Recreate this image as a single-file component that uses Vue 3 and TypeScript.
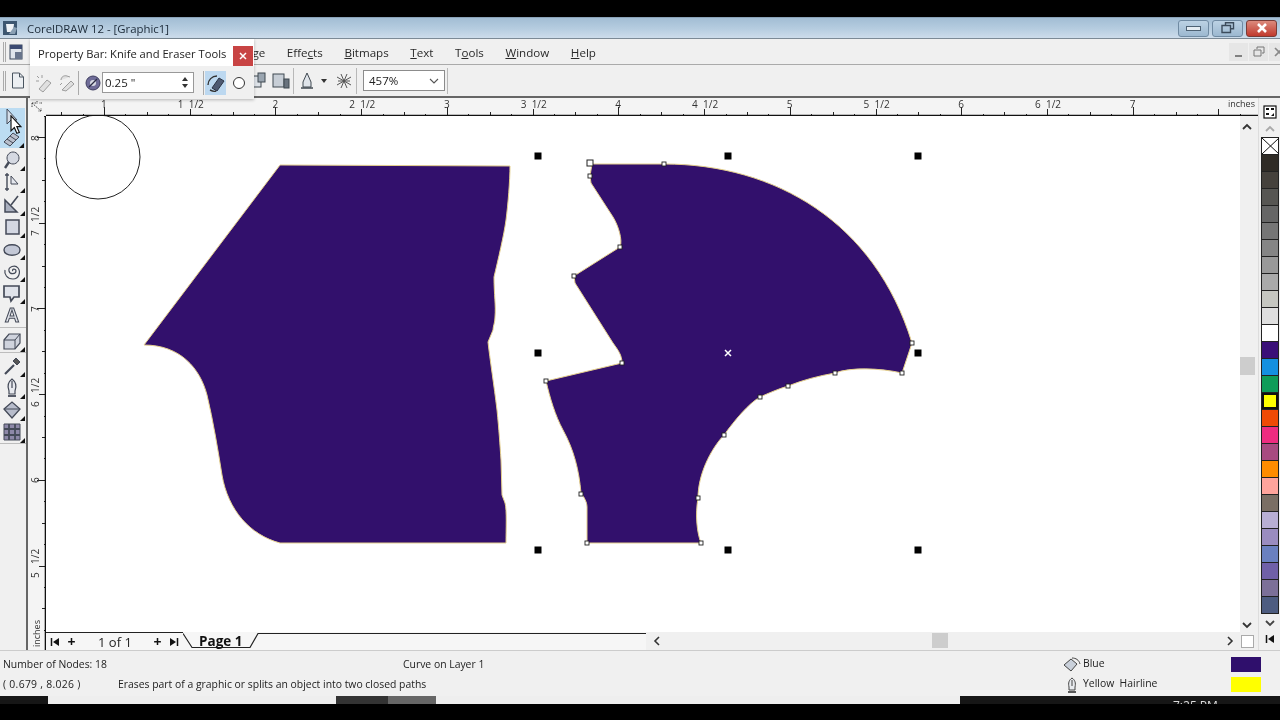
<template>
  <div class="screen">
    <div class="black-top"></div>

    <div class="window">
      <header class="title-bar">
        <svg class="app-icon" width="16" height="16" viewBox="0 0 16 16">
          <rect x="1" y="1" width="14" height="14" fill="#3c5670" />
          <path d="M4 4h8l-1 8H5z" fill="#eef2f6" />
          <path d="M12 7l3 1-2 6H7z" fill="#8aa0b4" />
        </svg>
        <span class="title-text">CorelDRAW 12 - [Graphic1]</span>
        <div class="win-buttons">
          <button class="win-btn"><i class="min-glyph"></i></button>
          <button class="win-btn">
            <svg width="14" height="12" viewBox="0 0 14 12"><path d="M4.5 3V.7h8v6H10M1 3.5h8.5v7H1z" fill="none" stroke="#3c4c5c" stroke-width="1.4" /></svg>
          </button>
          <button class="win-btn close">
            <svg width="12" height="10" viewBox="0 0 12 10"><path d="M2 1l8 8M10 1L2 9" stroke="#fff" stroke-width="2.6" /></svg>
          </button>
        </div>
      </header>

      <nav class="menu-bar">
        <i class="grip"></i>
        <svg class="doc-icon" width="15" height="16" viewBox="0 0 15 16">
          <rect x="1" y="1" width="12" height="14" fill="#dfe5ec" stroke="#39465a" />
          <rect x="1" y="1" width="12" height="4" fill="#3b4a72" />
          <rect x="6" y="8" width="7" height="7" fill="#68758c" />
        </svg>
        <div class="menu-items">
          <span v-for="m in menus" :key="m.label" class="menu-item">{{ m.before }}<u>{{ m.key }}</u>{{ m.after }}</span>
        </div>
        <div class="doc-buttons">
          <span class="doc-btn">
            <svg width="12" height="12" viewBox="0 0 12 12"><path d="M2 10h7" stroke="#666" stroke-width="1.6" /></svg>
          </span>
          <span class="doc-btn">
            <svg width="12" height="12" viewBox="0 0 12 12"><path d="M4 3V1h7v6H9M1 4h7v6H1z" fill="none" stroke="#777" /></svg>
          </span>
          <span class="doc-btn">
            <svg width="12" height="12" viewBox="0 0 12 12"><path d="M2 2l8 8M10 2l-8 8" stroke="#888" stroke-width="1.6" /></svg>
          </span>
        </div>
      </nav>

      <div class="prop-bar">
        <i class="grip"></i>
        <svg class="new-doc" width="14" height="17" viewBox="0 0 14 17">
          <path d="M1.5 1h7l4 4v11h-11z" fill="#eceff2" stroke="#4a5560" />
          <path d="M8.5 1v4h4" fill="none" stroke="#4a5560" />
        </svg>
        <div class="prop-right">
          <svg width="18" height="18" viewBox="0 0 18 18">
            <rect x="1" y="4" width="9" height="11" fill="#dde2e8" stroke="#3f4850" />
            <rect x="7" y="1" width="7" height="9" fill="#9aa5b0" stroke="#3f4850" />
          </svg>
          <svg class="ml3" width="18" height="18" viewBox="0 0 18 18">
            <rect x="1" y="2" width="11" height="13" fill="#c7ced6" stroke="#3f4850" />
            <rect x="12" y="7" width="5" height="9" fill="#69737e" stroke="#3f4850" />
          </svg>
          <i class="prop-sep ml3"></i>
          <svg class="ml4" width="18" height="18" viewBox="0 0 18 18">
            <path d="M9 1l4 9v5H5v-5z" fill="#dfe4ea" stroke="#3f4850" />
            <path d="M3 16h12" stroke="#3f4850" stroke-width="1.5" />
          </svg>
          <i class="caret"></i>
          <svg class="ml8" width="18" height="18" viewBox="0 0 18 18">
            <path d="M2 5l14 8M2 13L16 5M6 2l6 14M12 2L6 16M3 9h12" fill="none" stroke="#555" />
          </svg>
          <i class="prop-sep ml3"></i>
          <div class="zoom-combo">
            <span>457%</span>
            <svg width="10" height="6" viewBox="0 0 10 6"><path d="M1 1l4 4 4-4" fill="none" stroke="#555" stroke-width="1.1" /></svg>
          </div>
          <i class="prop-sep ml2"></i>
        </div>
      </div>

      <section class="workspace">
        <aside class="toolbox">
          <div
            v-for="t in tools"
            :key="t.name"
            class="tool"
            :class="{ picked: t.picked, ruled: t.ruled }"
          >
            <svg width="20" height="20" viewBox="0 0 20 20">
              <path
                v-for="(p, i) in t.paths"
                :key="i"
                :d="p.d"
                :fill="p.fill ?? 'none'"
                stroke="#444a58"
                :stroke-width="p.w ?? 1"
              />
              <text v-if="t.glyph" x="10" y="17" text-anchor="middle" class="tool-glyph">{{ t.glyph }}</text>
            </svg>
            <i v-if="t.flyout" class="flyout"></i>
          </div>
        </aside>

        <div class="center">
          <div class="ruler-corner">
            <svg width="16" height="14" viewBox="0 0 16 14">
              <path d="M3 3l9 8M3 3h4M3 3v4M12 11h-3M12 11V8M8 1v3M13 3h-3" fill="none" stroke="#444" stroke-dasharray="1.5 1" />
            </svg>
          </div>

          <svg class="h-ruler" width="1212" height="18" viewBox="46 98 1212 18">
            <line
              v-for="tick in hTicks"
              :key="tick.x"
              :x1="tick.x"
              :x2="tick.x"
              y1="116"
              :y2="116 - tick.len"
              stroke="#222"
            />
            <text v-for="l in hLabels" :key="l.text + l.x" :x="l.x" y="108" class="ruler-label">{{ l.text }}</text>
            <text x="1228" y="107" class="ruler-label small">inches</text>
            <line x1="46" x2="1258" y1="115.5" y2="115.5" stroke="#111" stroke-width="1.6" />
          </svg>

          <svg class="v-ruler" width="18" height="534" viewBox="28 116 18 534">
            <line
              v-for="tick in vTicks"
              :key="tick.y"
              :y1="tick.y"
              :y2="tick.y"
              x1="46"
              :x2="46 - tick.len"
              stroke="#222"
            />
            <text
              v-for="l in vLabels"
              :key="l.text + l.y"
              class="ruler-label"
              :transform="`translate(39 ${l.y}) rotate(-90)`"
            >{{ l.text }}</text>
            <text class="ruler-label small" transform="translate(40 647) rotate(-90)">inches</text>
            <line x1="45.5" x2="45.5" y1="116" y2="650" stroke="#111" stroke-width="1.6" />
          </svg>

          <svg class="canvas" width="1194" height="516" viewBox="46 116 1194 516">
            <circle cx="98" cy="157" r="42" fill="#fff" stroke="#222" />
            <path class="shape" :d="leftShape" />
            <path class="shape" :d="rightShape" />
            <rect
              v-for="n in nodes"
              :key="n[0] + '-' + n[1]"
              :x="n[0] - 2"
              :y="n[1] - 2"
              width="4"
              height="4"
              fill="#fff"
              stroke="#222"
              stroke-width="0.9"
            />
            <rect x="587" y="160" width="6" height="6" fill="#fff" stroke="#222" />
            <rect
              v-for="h in handles"
              :key="h[0] + '_' + h[1]"
              :x="h[0] - 3.5"
              :y="h[1] - 3.5"
              width="7"
              height="7"
              fill="#000"
            />
            <path d="M725 350l6 6M731 350l-6 6" stroke="#fff" stroke-width="1.5" />
          </svg>

          <div class="v-scroll">
            <svg width="12" height="8" viewBox="0 0 12 8"><path d="M2 6l4-4 4 4" fill="none" stroke="#333" stroke-width="1.8" /></svg>
            <i class="v-thumb"></i>
            <svg width="12" height="8" viewBox="0 0 12 8"><path d="M2 2l4 4 4-4" fill="none" stroke="#333" stroke-width="1.8" /></svg>
          </div>

          <div class="page-tabs">
            <span class="tab-nav">
              <svg width="10" height="10" viewBox="0 0 10 10"><path d="M1.5 1v8" stroke="#111" stroke-width="1.5" /><path d="M9 1v8L3 5z" fill="#111" /></svg>
              <b class="plus first">+</b>
              <span class="page-count">1 of 1</span>
              <b class="plus">+</b>
              <svg class="ml7" width="10" height="10" viewBox="0 0 10 10"><path d="M8.5 1v8" stroke="#111" stroke-width="1.5" /><path d="M1 1v8l6-4z" fill="#111" /></svg>
            </span>
            <div class="tab-strip">
              <svg class="tab-shape" width="463" height="18" viewBox="183 632 463 18">
                <path d="M183 633.5L192 647.5H250L258 633.5H646" fill="none" stroke="#222" stroke-width="1.2" />
              </svg>
              <span class="page-name">Page 1</span>
            </div>
            <div class="h-scroll">
              <svg width="8" height="12" viewBox="0 0 8 12"><path d="M6 2L2 6l4 4" fill="none" stroke="#333" stroke-width="1.6" /></svg>
              <i class="h-thumb"></i>
              <svg width="8" height="12" viewBox="0 0 8 12"><path d="M2 2l4 4-4 4" fill="none" stroke="#333" stroke-width="1.6" /></svg>
            </div>
          </div>

          <div class="corner-box"><i></i></div>
        </div>

        <aside class="palette">
          <svg class="palette-opt" width="14" height="14" viewBox="0 0 14 14">
            <rect x="1" y="1" width="12" height="12" fill="#fff" stroke="#111" stroke-width="1.2" />
            <path d="M3 4h3M8 4h3M3 9h3" stroke="#111" stroke-width="2" />
            <path d="M11 8v3H8z" fill="#111" />
          </svg>
          <svg class="pal-arrow" width="12" height="8" viewBox="0 0 12 8"><path d="M2 6l4-4 4 4" fill="none" stroke="#aaa" stroke-width="1.8" /></svg>
          <div class="swatches">
            <div class="swatch none">
              <svg width="17" height="16" viewBox="0 0 17 16"><path d="M0 0l17 16M17 0L0 16" stroke="#111" /></svg>
            </div>
            <div
              v-for="c in palette"
              :key="c"
              class="swatch"
              :class="{ active: c === '#ffff00' }"
              :style="{ background: c }"
            ></div>
          </div>
          <svg class="pal-arrow" width="12" height="8" viewBox="0 0 12 8"><path d="M2 2l4 4 4-4" fill="none" stroke="#444" stroke-width="1.8" /></svg>
          <svg class="pal-end" width="10" height="10" viewBox="0 0 10 10"><path d="M1.5 1v8" stroke="#111" stroke-width="1.5" /><path d="M9 1v8L3 5z" fill="#111" /></svg>
        </aside>

        <svg class="cursor" width="12" height="20" viewBox="0 0 14 24">
          <path d="M1 1v18l4-4 3 7 3-1-3-7h5z" fill="#fff" stroke="#111" stroke-width="1.4" />
        </svg>
      </section>

      <footer class="status-bar">
        <div class="status-left">
          <div class="status-row">
            <span class="col-a">Number of Nodes: 18</span>
            <span>Curve on Layer 1</span>
          </div>
          <div class="status-row">
            <span class="col-b">( 0.679 , 8.026  )</span>
            <span>Erases part of a graphic or splits an object into two closed paths</span>
          </div>
        </div>
        <div class="status-right">
          <div class="fill-row">
            <svg width="18" height="16" viewBox="0 0 18 16">
              <path d="M1 8l7-6 6 5-6 7z" fill="#c9d0da" stroke="#444" />
              <path d="M9 1c4 0 7 2 8 6" fill="none" stroke="#444" />
            </svg>
            <span class="fill-name">Blue</span>
            <i class="fill-chip blue"></i>
          </div>
          <div class="fill-row">
            <svg width="18" height="16" viewBox="0 0 18 16">
              <path d="M9 1c3 2 4 5 3 9v3H6v-3C5 6 6 3 9 1zM9 3v6" fill="#e8ebef" stroke="#444" />
              <path d="M5 15h8" stroke="#333" stroke-width="1.6" />
            </svg>
            <span class="fill-name">Yellow &nbsp;Hairline</span>
            <i class="fill-chip yellow"></i>
          </div>
        </div>
      </footer>
    </div>

    <div class="taskbar">
      <i class="seg dark" style="width: 48px"></i>
      <i class="seg light" style="width: 288px"></i>
      <i class="seg mid" style="width: 52px"></i>
      <i class="seg grey" style="width: 48px"></i>
      <i class="seg light" style="width: 524px"></i>
      <div class="seg dark clock"><span>7:25 PM</span></div>
    </div>

    <div class="property-float">
      <div class="float-title">
        <span>Property Bar: Knife and Eraser Tools</span>
        <button class="float-close">
          <svg width="8" height="8" viewBox="0 0 8 8"><path d="M1 1l6 6M7 1L1 7" stroke="#fff" stroke-width="1.5" /></svg>
        </button>
      </div>
      <div class="float-body">
        <svg class="faded" width="20" height="20" viewBox="0 0 20 20">
          <path d="M5 16l8-9 4 3-8 9zM3 3l2 2M8 2v3M2 8h3" fill="#ddd" stroke="#888" />
        </svg>
        <svg class="faded" width="20" height="20" viewBox="0 0 20 20">
          <path d="M5 17l9-9 3 3-8 7zM4 7c0-3 3-5 6-4l3 1M3 12l2-2" fill="#ddd" stroke="#888" />
        </svg>
        <i class="float-sep first"></i>
        <svg width="16" height="16" viewBox="0 0 16 16">
          <circle cx="8" cy="8" r="7" fill="#6f6c98" stroke="#3f3e60" />
          <circle cx="8" cy="8" r="3" fill="#d8dbe4" />
          <path d="M4 12l8-8" stroke="#2c2c44" stroke-width="1.3" />
        </svg>
        <div class="thickness">
          <span>0.25 "</span>
          <div class="spinner">
            <i class="up"></i>
            <i class="down"></i>
          </div>
        </div>
        <i class="float-sep second"></i>
        <div class="float-active">
          <svg width="20" height="20" viewBox="0 0 20 20">
            <path d="M6 15l7-10 5 3-7 10z" fill="#4e5a72" stroke="#2c3444" />
            <path d="M2 12c0-5 4-9 9-9M4 17c2 1 4 2 6 1" fill="none" stroke="#333" stroke-width="1.4" />
          </svg>
        </div>
        <i class="round-tip"></i>
      </div>
    </div>
  </div>
</template>

<script setup lang="ts">
interface MenuEntry {
  label: string;
  before: string;
  key: string;
  after: string;
}

interface ToolPath {
  d: string;
  fill?: string;
  w?: number;
}

interface Tool {
  name: string;
  paths: ToolPath[];
  flyout?: boolean;
  picked?: boolean;
  ruled?: boolean;
  glyph?: string;
}

const menus: MenuEntry[] = [
  { label: "Arrange", before: "Arran", key: "g", after: "e" },
  { label: "Effects", before: "Effe", key: "c", after: "ts" },
  { label: "Bitmaps", before: "", key: "B", after: "itmaps" },
  { label: "Text", before: "", key: "T", after: "ext" },
  { label: "Tools", before: "T", key: "o", after: "ols" },
  { label: "Window", before: "", key: "W", after: "indow" },
  { label: "Help", before: "", key: "H", after: "elp" },
];

const tools: Tool[] = [
  { name: "pick", picked: true, paths: [{ d: "M5 1v15l4-4h6z", fill: "#d4dde8" }] },
  { name: "shape", picked: true, flyout: true, paths: [{ d: "M2 14l9-9 6 4-9 9z", fill: "#b9bfcc" }, { d: "M5 11l6 4M8 8l6 4" }] },
  { name: "zoom", flyout: true, paths: [{ d: "M11 2a6 6 0 1 0 .01 0z", fill: "#d5d9e2" }, { d: "M7 12l-4 6", w: 2.4 }] },
  { name: "curve", flyout: true, paths: [{ d: "M5 1v18M3 3h4M3 17h4", w: 1.4 }, { d: "M9 12V4l7 8z", fill: "#e4e7ee" }] },
  { name: "dimension", flyout: true, paths: [{ d: "M3 18V6l12 12z", fill: "#aab0bf", w: 1.5 }, { d: "M9 11l7-9", w: 1.6 }] },
  { name: "rectangle", flyout: true, paths: [{ d: "M4 3h13v14H4z", fill: "#d3d7e2", w: 1.5 }] },
  { name: "ellipse", flyout: true, paths: [{ d: "M2 11c0-7 16-7 16 0s-16 7-16 0z", fill: "#c3c8d6", w: 1.4 }] },
  { name: "spiral", flyout: true, paths: [{ d: "M11 10c-2-2 3-3 3 0s-6 4-7 0 6-7 9-3 1 11-5 11-9-5-8-9", w: 1.2 }] },
  { name: "callout", flyout: true, paths: [{ d: "M2 3h15v11h-5l-3 4-1-4H2z", fill: "#e0e3ea", w: 1.7 }] },
  { name: "text", glyph: "A", ruled: true, paths: [] },
  { name: "extrude", flyout: true, ruled: true, paths: [{ d: "M2 9l5-6h11v9l-5 6H2z", fill: "#cfd3dd", w: 1.2 }, { d: "M2 9h11v9M13 9l5-6" }] },
  { name: "eyedropper", flyout: true, paths: [{ d: "M3 18l9-9", w: 2.2 }, { d: "M11 5l4 4 3-3-4-4z", fill: "#555" }] },
  { name: "outline", flyout: true, paths: [{ d: "M10 1c4 3 5 7 3 12v3H7v-3C5 8 6 4 10 1zM10 3v7", fill: "#e7e9ee", w: 1.2 }, { d: "M6 18h8", w: 1.8 }] },
  { name: "fill", flyout: true, paths: [{ d: "M2 9l8-7 8 7-8 9z", fill: "#b7bccb", w: 1.3 }, { d: "M2 9h16" }] },
  { name: "interactive", flyout: true, ruled: true, paths: [{ d: "M2 2h16v16H2z", fill: "#8d88a8" }, { d: "M2 7h16M2 13h16M7 2v16M13 2v16", w: 1.8 }] },
];

const palette: string[] = [
  "#2f2b26", "#45413c", "#575653", "#666666", "#767676", "#858585",
  "#999999", "#aaaaaa", "#c5c6c0", "#dedede", "#ffffff", "#3a1078",
  "#1490e0", "#0f9c58", "#ffff00", "#f04a06", "#ee2c80", "#a84a80",
  "#ff8c00", "#ffa49c", "#7a6e64", "#b8aed4", "#9a8cc0", "#6a80c0",
  "#7060a8", "#7c7098", "#4d5c80",
];

// one inch on the rulers is 171.45px, x=1 sits at 104 and y=8 sits at 137
const INCH = 171.45;

function tickLen(step: number): number {
  if (step % 8 === 0) return 9;
  if (step % 4 === 0) return 7;
  if (step % 2 === 0) return 4;
  return 2;
}

const hTicks: { x: number; len: number }[] = [];
for (let s = 0; s < 57; s++) {
  const x = Math.round(104 + ((s - 2) * INCH) / 8);
  if (x > 46 && x < 1254) hTicks.push({ x: x + 0.5, len: tickLen(s - 2) });
}

const hLabels: { text: string; x: number }[] = [];
for (let i = 1; i <= 7; i++) {
  const x = 104 + (i - 1) * INCH;
  hLabels.push({ text: String(i), x: x - 3 });
  if (i < 7) {
    hLabels.push({ text: String(i), x: x + INCH / 2 - 12 });
    hLabels.push({ text: "1/2", x: x + INCH / 2 - 1 });
  }
}

const vTicks: { y: number; len: number }[] = [];
for (let s = -1; s < 24; s++) {
  const y = Math.round(137 + (s * INCH) / 8);
  if (y < 632) vTicks.push({ y: y + 0.5, len: tickLen(s) });
}

const vLabels: { text: string; y: number }[] = [
  { text: "8", y: 141 },
  { text: "7", y: 236 },
  { text: "1/2", y: 222 },
  { text: "7", y: 312 },
  { text: "6", y: 407 },
  { text: "1/2", y: 393 },
  { text: "6", y: 483 },
  { text: "5", y: 578 },
  { text: "1/2", y: 564 },
];

const leftShape =
  "M280 165L510 166C510 180 508 205 506 220C504 235 498 260 494 277C494 295 496 305 495 317C495 323 493 326 493 330L488 342C490 360 494 385 497 410C499 430 500 445 501 460L502 495L505 503C507 510 506 530 506 543L280 543C250 535 228 510 222 475C218 450 213 420 207 395C200 368 180 345 144 345Z";

const rightShape =
  "M592 164L664 164C775 164 875 222 912 343L902 373C880 368 850 367 835 373C818 376 803 380 788 386C778 389 769 393 760 397C748 404 735 420 724 435C710 450 698 475 698 498C695 515 697 533 701 543L587 543L587 507C587 502 584 497 581 493C579 470 574 450 563 430C555 415 550 398 546 381L622 363C622 355 618 350 613 343L575 283L574 276L620 247C623 240 618 225 613 217L591 183L590 176Z";

const nodes: [number, number][] = [
  [664, 164], [590, 176], [620, 247], [574, 276], [622, 363], [546, 381],
  [581, 494], [587, 543], [701, 543], [698, 498], [724, 435], [760, 397],
  [788, 386], [835, 373], [902, 373], [912, 343],
];

const handles: [number, number][] = [
  [538, 156], [728, 156], [918, 156], [538, 353],
  [918, 353], [538, 550], [728, 550], [918, 550],
];
</script>

<style scoped>
.screen {
  position: relative;
  width: 1280px;
  height: 720px;
  overflow: hidden;
  background: #000;
  font-family: "Open Sans", "Noto Sans", sans-serif;
  color: #222;
  filter: blur(0.3px);
}

.black-top {
  height: 17px;
}

.window {
  display: flex;
  flex-direction: column;
  height: 679px;
  background: #f0f0f0;
}

.window > * {
  flex: none;
}

.title-bar {
  display: flex;
  align-items: center;
  height: 22px;
  padding-left: 2px;
  background: linear-gradient(180deg, #a2bdd4 0%, #b6cde0 55%, #cddceb 100%);
  border-top: 1px solid #8aa2b8;
  border-bottom: 1px solid #7c8a96;
  box-sizing: border-box;
}

.app-icon {
  margin-right: 9px;
}

.title-text {
  font-size: 11.4px;
  color: #1c2a38;
}

.win-buttons {
  display: flex;
  gap: 3px;
  margin-left: auto;
  margin-right: 3px;
}

.win-btn {
  display: flex;
  align-items: center;
  justify-content: center;
  width: 31px;
  height: 17px;
  padding: 0;
  border: 1px solid #6f8aa2;
  border-radius: 3px;
  background: linear-gradient(180deg, #bcd2e4, #9cb8d0);
}

.win-btn.close {
  border-color: #7a3c36;
  background: linear-gradient(180deg, #dc8a7c, #c03a2e);
}

.min-glyph {
  width: 15px;
  height: 5px;
  background: #e4ecf2;
  border: 1px solid #4e6274;
  box-sizing: border-box;
}

.menu-bar {
  display: flex;
  align-items: center;
  height: 26px;
  border-bottom: 1px solid #aaa;
  padding-left: 3px;
  box-sizing: border-box;
}

.grip {
  flex: none;
  width: 3px;
  height: 20px;
  border-left: 1px solid #aaa;
  border-right: 1px solid #aaa;
  box-sizing: border-box;
}

.doc-icon {
  margin-left: 3px;
}

.menu-items {
  display: flex;
  gap: 21.6px;
  margin-left: 198px;
  padding-top: 2px;
  font-size: 11.6px;
  color: #2a2a2a;
}

.doc-buttons {
  display: flex;
  flex: none;
  gap: 1px;
  margin-left: auto;
  margin-right: -8px;
}

.doc-btn {
  display: flex;
  flex: none;
  align-items: center;
  justify-content: center;
  width: 19px;
  height: 18px;
  background: #e6e6e6;
}

.prop-bar {
  display: flex;
  align-items: center;
  height: 31px;
  padding-left: 3px;
  background: #f0f0f0;
}

.new-doc {
  margin-left: 5px;
}

.prop-right {
  display: flex;
  align-items: center;
  margin-left: 226px;
}

.ml2 {
  margin-left: 2px;
}

.ml3 {
  margin-left: 3px;
}

.ml4 {
  margin-left: 4px;
}

.ml7 {
  margin-left: 7px;
}

.ml8 {
  margin-left: 8px;
}

.prop-sep {
  width: 1px;
  height: 26px;
  background: #b8b8b8;
}

.caret {
  width: 0;
  height: 0;
  margin-left: 5px;
  border-left: 3px solid transparent;
  border-right: 3px solid transparent;
  border-top: 4px solid #333;
}

.zoom-combo {
  display: flex;
  align-items: center;
  justify-content: space-between;
  width: 82px;
  height: 21px;
  margin-left: 6px;
  padding: 0 5px;
  border: 1px solid #8c8c8c;
  background: #fff;
  font-size: 11.5px;
  box-sizing: border-box;
}

.workspace {
  position: relative;
  display: flex;
  height: 554px;
  border-top: 2px solid #666;
  box-sizing: border-box;
}

.toolbox {
  display: flex;
  flex-direction: column;
  flex: 0 0 28px;
  padding-top: 10px;
  border-right: 2px solid #666;
  box-sizing: border-box;
}

.tool {
  position: relative;
  display: flex;
  flex: none;
  align-items: center;
  justify-content: center;
  height: 22.2px;
  padding-right: 2px;
  box-sizing: content-box;
}

.tool.picked {
  height: 20px;
  margin-right: 1px;
  background: #bcdcf2;
}

.tool.picked + .tool:not(.picked) {
  margin-top: 1px;
}

.tool.ruled {
  margin-bottom: 2px;
  border-bottom: 1px solid #bdbdbd;
}

.tool-glyph {
  font-family: "Liberation Sans", sans-serif;
  font-size: 20px;
  font-weight: 700;
  fill: #e2e4ea;
  stroke: #444a58;
  stroke-width: 1;
}

.flyout {
  position: absolute;
  right: 1px;
  bottom: 0;
  width: 0;
  height: 0;
  border-left: 5px solid transparent;
  border-bottom: 5px solid #111;
}

.center {
  display: grid;
  grid-template-columns: 18px 1194px 18px;
  grid-template-rows: 18px 516px 18px;
  flex: 0 0 1230px;
}

.ruler-corner {
  display: flex;
  align-items: center;
  justify-content: center;
  background: #f4f4f4;
}

.h-ruler {
  grid-column: 2 / 4;
  display: block;
  background: #f4f4f4;
}

.v-ruler {
  grid-column: 1;
  grid-row: 2 / 4;
  display: block;
  background: #f4f4f4;
}

.ruler-label {
  font-size: 10px;
  fill: #333;
}

.ruler-label.small {
  font-size: 9px;
}

.canvas {
  display: block;
  background: #fff;
}

.shape {
  fill: #32106c;
  stroke: #e4cf8c;
  stroke-width: 1;
}

.v-scroll {
  position: relative;
  display: flex;
  flex-direction: column;
  align-items: center;
  justify-content: space-between;
  padding: 7px 4px 3px 0;
  background: #f0f0f0;
  box-sizing: border-box;
}

.v-thumb {
  position: absolute;
  top: 241px;
  left: 0;
  width: 15px;
  height: 18px;
  background: #cdcdcd;
}

.page-tabs {
  grid-column: 2;
  display: flex;
  height: 18px;
  background: #f6f6f6;
}

.tab-nav {
  display: flex;
  align-items: center;
  flex: 0 0 137px;
  min-width: 0;
  padding-left: 4px;
  border-top: 1px solid #222;
  box-sizing: border-box;
}

.plus {
  width: 9px;
  font-size: 14px;
  font-weight: 700;
  text-align: center;
  color: #111;
}

.plus.first {
  margin-left: 7px;
}

.page-count {
  width: 55px;
  margin-left: 22px;
  font-size: 13px;
  color: #222;
}

.tab-strip {
  position: relative;
  display: flex;
  align-items: center;
  flex: 0 0 463px;
}

.tab-shape {
  position: absolute;
  left: 0;
  top: 0;
}

.page-name {
  position: relative;
  margin-left: 16px;
  font-size: 13.5px;
  font-weight: 700;
  color: #111;
}

.h-scroll {
  position: relative;
  display: flex;
  align-items: center;
  justify-content: space-between;
  flex: 1;
  min-width: 0;
  padding: 0 6px 0 7px;
  background: #f0f0f0;
}

.h-thumb {
  position: absolute;
  left: 286px;
  top: 1px;
  width: 16px;
  height: 15px;
  background: #cdcdcd;
}

.corner-box {
  display: flex;
  align-items: center;
  justify-content: center;
  padding-right: 3px;
  background: #f0f0f0;
}

.corner-box i {
  width: 11px;
  height: 11px;
  background: #fff;
  border: 1px solid #aaa;
}

.palette {
  position: relative;
  display: flex;
  flex-direction: column;
  align-items: center;
  flex: 0 0 22px;
  border-left: 1px solid #ddd;
  box-sizing: border-box;
  padding-top: 7px;
}

.palette-opt {
  display: block;
  flex: none;
  margin-bottom: 4px;
}

.pal-arrow {
  display: block;
  flex: none;
  margin: 2px 0;
}

.swatches {
  display: flex;
  flex: none;
  flex-direction: column;
  width: 18px;
  margin: 2px 0 3px;
  border: 1px solid #222;
  box-sizing: border-box;
}

.swatch {
  height: 16px;
  border-bottom: 1px solid #222;
  box-sizing: content-box;
}

.swatch:last-child {
  border-bottom: 0;
}

.swatch.none {
  background: #fff;
}

.swatch.none svg {
  display: block;
}

.swatch.active {
  box-shadow: inset 0 0 0 2px #111;
}

.pal-end {
  flex: none;
  margin-top: 5px;
}

.cursor {
  position: absolute;
  left: 10px;
  top: 17px;
}

.status-bar {
  display: flex;
  height: 46px;
  padding: 6px 19px 0 3px;
  border-top: 1px solid #ccc;
  font-size: 10.4px;
  box-sizing: border-box;
}

.status-left {
  flex: 1;
  margin-top: -3px;
}

.status-row {
  display: flex;
  align-items: center;
  height: 20px;
}

.col-a {
  width: 400px;
}

.col-b {
  width: 115px;
  white-space: pre;
  letter-spacing: 0.3px;
}

.status-right {
  display: flex;
  flex-direction: column;
  gap: 5px;
  width: 198px;
}

.fill-row {
  display: flex;
  align-items: center;
  height: 15px;
}

.fill-name {
  flex: 1;
  margin: -3px 0 0 2px;
}

.fill-chip {
  width: 30px;
  height: 15px;
}

.fill-chip.blue {
  background: #2f0f6c;
}

.fill-chip.yellow {
  background: #ffff00;
}

.taskbar {
  display: flex;
  height: 8px;
}

.seg {
  display: block;
  height: 8px;
}

.seg.dark {
  background: #161616;
}

.seg.light {
  background: #eeeeee;
}

.seg.mid {
  background: #333;
}

.seg.grey {
  background: #666;
}

.clock {
  position: relative;
  flex: 1;
  overflow: hidden;
}

.clock span {
  position: absolute;
  left: 213px;
  top: 1px;
  font-size: 12px;
  color: #ddd;
}

.property-float {
  position: absolute;
  left: 30px;
  top: 39px;
  width: 224px;
  height: 60px;
  background: #f0f0f0;
  box-shadow: 0 1px 3px rgba(0, 0, 0, 0.25);
}

.float-title {
  display: flex;
  align-items: flex-start;
  justify-content: space-between;
  height: 27px;
  padding: 7px 1px 0 8px;
  background: #fff;
  font-size: 11.2px;
  white-space: nowrap;
  box-sizing: border-box;
}

.float-close {
  display: flex;
  flex: none;
  align-items: center;
  justify-content: center;
  width: 20px;
  height: 20px;
  padding: 0;
  border: 0;
  background: #c84444;
}

.float-body {
  display: flex;
  align-items: center;
  height: 33px;
  padding-left: 4px;
}

.faded {
  margin-right: 3px;
  opacity: 0.8;
}

.float-sep {
  width: 1px;
  height: 24px;
  background: #aaa;
}

.float-sep.first {
  margin: 0 6px 0 -2px;
}

.float-sep.second {
  margin: 0 1px 0 9px;
}

.thickness {
  display: flex;
  align-items: center;
  justify-content: space-between;
  width: 92px;
  height: 21px;
  margin-left: 1px;
  padding: 0 2px;
  background: #fff;
  border: 1px solid #999;
  font-size: 11.5px;
  box-sizing: border-box;
}

.spinner {
  display: flex;
  flex-direction: column;
  gap: 3px;
  padding: 0 3px;
}

.spinner i {
  width: 0;
  height: 0;
  border-left: 3px solid transparent;
  border-right: 3px solid transparent;
}

.spinner .up {
  border-bottom: 4px solid #333;
}

.spinner .down {
  border-top: 4px solid #333;
}

.float-active {
  display: flex;
  align-items: center;
  justify-content: center;
  width: 21px;
  height: 24px;
  background: #bcd8f0;
}

.round-tip {
  width: 12px;
  height: 12px;
  margin-left: 7px;
  border: 1.5px solid #333;
  border-radius: 50%;
  background: #fff;
  box-sizing: border-box;
}
</style>
